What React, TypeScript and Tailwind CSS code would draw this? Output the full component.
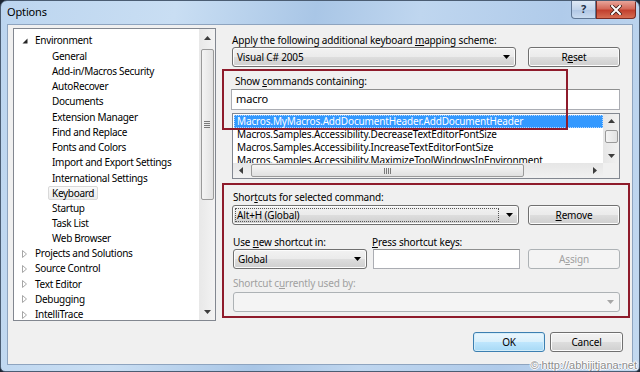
import React from 'react';

type TreeItem = { label: string; level: 0 | 1; state?: 'open' | 'closed'; selected?: boolean };

const tree: TreeItem[] = [
  { label: 'Environment', level: 0, state: 'open' },
  { label: 'General', level: 1 },
  { label: 'Add-in/Macros Security', level: 1 },
  { label: 'AutoRecover', level: 1 },
  { label: 'Documents', level: 1 },
  { label: 'Extension Manager', level: 1 },
  { label: 'Find and Replace', level: 1 },
  { label: 'Fonts and Colors', level: 1 },
  { label: 'Import and Export Settings', level: 1 },
  { label: 'International Settings', level: 1 },
  { label: 'Keyboard', level: 1, selected: true },
  { label: 'Startup', level: 1 },
  { label: 'Task List', level: 1 },
  { label: 'Web Browser', level: 1 },
  { label: 'Projects and Solutions', level: 0, state: 'closed' },
  { label: 'Source Control', level: 0, state: 'closed' },
  { label: 'Text Editor', level: 0, state: 'closed' },
  { label: 'Debugging', level: 0, state: 'closed' },
  { label: 'IntelliTrace', level: 0, state: 'closed' },
];

const commands = [
  'Macros.MyMacros.AddDocumentHeader.AddDocumentHeader',
  'Macros.Samples.Accessibility.DecreaseTextEditorFontSize',
  'Macros.Samples.Accessibility.IncreaseTextEditorFontSize',
  'Macros.Samples.Accessibility.MaximizeToolWindowsInEnvironment',
];

const btnBg = 'bg-[linear-gradient(#f2f2f2,#ebebeb_48%,#dddddd_52%,#cfcfcf)]';

const DropArrow = ({ color = '#000' }: { color?: string }) => (
  <svg width="7" height="4" viewBox="0 0 7 4">
    <polygon points="0,0 7,0 3.5,4" fill={color} />
  </svg>
);

const Arrow = ({ dir, color = '#000' }: { dir: 'up' | 'down' | 'left' | 'right'; color?: string }) => {
  const pts = {
    up: '0,4 7,4 3.5,0',
    down: '0,0 7,0 3.5,4',
    left: '4,0 4,7 0,3.5',
    right: '0,0 0,7 4,3.5',
  }[dir];
  const w = dir === 'up' || dir === 'down' ? 7 : 4;
  const h = dir === 'up' || dir === 'down' ? 4 : 7;
  return (
    <svg width={w} height={h} viewBox={`0 0 ${w} ${h}`}>
      <polygon points={pts} fill={color} />
    </svg>
  );
};

const Grip = ({ vertical }: { vertical: boolean }) => (
  <div className={`flex ${vertical ? 'flex-col gap-[1px]' : 'flex-row gap-[1px]'}`}>
    {[0, 1, 2, 3].map((i) => (
      <div key={i} className={vertical ? 'w-[6px] h-[1px] bg-[#7a7a7a]' : 'h-[6px] w-[1px] bg-[#7a7a7a]'} />
    ))}
  </div>
);

const Button = ({
  children,
  className = '',
  disabled = false,
  primary = false,
}: {
  children: React.ReactNode;
  className?: string;
  disabled?: boolean;
  primary?: boolean;
}) => (
  <div
    className={`h-[20px] flex items-center justify-center rounded-[3px] border ${
      primary
        ? 'border-[#3c7fb1] bg-[linear-gradient(#eaf6fd,#d9f0fc_48%,#bee6fd_52%,#a7d9f5)] shadow-[inset_0_0_0_1px_#d3edf9]'
        : disabled
        ? 'border-[#adb2b5] bg-[#f4f4f4] text-[#a0a0a0]'
        : `border-[#707070] ${btnBg} shadow-[inset_0_0_0_1px_#fcfcfc]`
    } ${className}`}
  >
    {children}
  </div>
);

const Combo = ({
  value,
  focused = false,
  disabled = false,
  className = '',
}: {
  value: string;
  focused?: boolean;
  disabled?: boolean;
  className?: string;
}) => (
  <div
    className={`h-[20px] flex items-center rounded-[3px] border ${
      disabled ? 'border-[#adb2b5] bg-[#f4f4f4]' : `border-[#707070] ${btnBg} shadow-[inset_0_0_0_1px_#fcfcfc]`
    } ${className}`}
  >
    <div className="flex-1 h-full p-[2px]">
      <div
        className={`h-full flex items-center pl-[1px] ${
          focused ? 'border border-dotted border-[#555]' : 'border border-transparent'
        }`}
      >
        {value}
      </div>
    </div>
    <div className="w-[17px] flex items-center justify-center">
      <DropArrow color={disabled ? '#a6a6a6' : '#000'} />
    </div>
  </div>
);

const Label = ({ children, className = '' }: { children: React.ReactNode; className?: string }) => (
  <div className={`h-[14px] leading-[14px] ${className}`}>{children}</div>
);

const TreeArrow = ({ state }: { state: 'open' | 'closed' }) =>
  state === 'open' ? (
    <svg width="6" height="6" viewBox="0 0 6 6">
      <polygon points="5.5,0.5 5.5,5.5 0.5,5.5" fill="#262626" />
    </svg>
  ) : (
    <svg width="5" height="8" viewBox="0 0 5 8">
      <polygon points="0.5,0.5 4.5,4 0.5,7.5" fill="#fff" stroke="#a6a6a6" strokeWidth="1" />
    </svg>
  );

const TreeView = () => (
  <div className="mt-[3px] w-[203px] h-[293px] border border-[#828790] bg-white flex tracking-[-0.3px]">
    <div className="flex-1 pt-[4px] overflow-hidden">
      {tree.map((item) => (
        <div key={item.label} className="h-[15.22px] flex items-center whitespace-nowrap">
          {item.level === 0 ? (
            <>
              <div className="w-[21px] pl-[8px] flex items-center">
                <TreeArrow state={item.state!} />
              </div>
              <span>{item.label}</span>
            </>
          ) : (
            <div className="pl-[34px] flex items-center">
              <span
                className={`px-[3px] h-[14px] leading-[13px] rounded-[2px] border ${
                  item.selected
                    ? 'border-[#d9d9d9] bg-[linear-gradient(#fafafa,#ececec)]'
                    : 'border-transparent'
                }`}
              >
                {item.label}
              </span>
            </div>
          )}
        </div>
      ))}
    </div>
    <div className="w-[16px] bg-[linear-gradient(90deg,#e8e8e8,#f3f3f3)] flex flex-col items-center">
      <div className="h-[17px] flex items-center justify-center">
        <Arrow dir="up" color="#3d3d3d" />
      </div>
      <div className="mt-[3px] w-[13px] h-[151px] rounded-[2px] border border-[#9a9a9a] bg-[linear-gradient(90deg,#f4f4f4,#e2e2e2)] flex items-center justify-center">
        <Grip vertical />
      </div>
      <div className="flex-1" />
      <div className="h-[17px] flex items-center justify-center">
        <Arrow dir="down" color="#3d3d3d" />
      </div>
    </div>
  </div>
);

const CommandList = () => (
  <div className="mt-[3px] w-[388px] border border-[#828790] bg-white flex flex-col">
    <div className="flex h-[49px]">
      <div className="w-[370px] h-[49px] overflow-hidden pt-[1px] pl-[1px] text-[10px]">
        {commands.map((c, i) => (
          <div
            key={c}
            className={`h-[13px] leading-[11px] whitespace-nowrap pl-[2px] ${
              i === 0 ? 'bg-[#3399ff] text-white border border-dotted border-[#b4d7ff]' : 'border border-transparent'
            }`}
          >
            {c}
          </div>
        ))}
      </div>
      <div className="w-[16px] h-[49px] bg-[linear-gradient(90deg,#e6e6e6,#f1f1f1)] flex flex-col items-center">
        <div className="h-[14px] flex items-center justify-center">
          <Arrow dir="up" color="#3d3d3d" />
        </div>
        <div className="mt-[2px] w-[13px] h-[13px] rounded-[2px] border border-[#9a9a9a] bg-[linear-gradient(90deg,#f4f4f4,#e2e2e2)]" />
        <div className="flex-1" />
        <div className="h-[14px] flex items-center justify-center">
          <Arrow dir="down" color="#3d3d3d" />
        </div>
      </div>
    </div>
    <div className="flex h-[15px]">
      <div className="w-[370px] h-[15px] bg-[linear-gradient(#e6e6e6,#f1f1f1)] flex items-center">
        <div className="w-[16px] h-[15px] flex items-center justify-center">
          <Arrow dir="left" color="#3d3d3d" />
        </div>
        <div className="ml-[2px] w-[273px] h-[13px] rounded-[2px] border border-[#9a9a9a] bg-[linear-gradient(#f6f6f6,#e0e0e0)] flex items-center justify-center">
          <Grip vertical={false} />
        </div>
        <div className="flex-1" />
        <div className="w-[16px] h-[15px] flex items-center justify-center">
          <Arrow dir="right" color="#3d3d3d" />
        </div>
      </div>
      <div className="w-[16px] h-[15px] bg-[#f0f0f0]" />
    </div>
  </div>
);

const RightPanel = () => (
  <div className="relative ml-[6px] w-[410px] pt-[8px] pl-[10px] pr-[12px]">
    <Label>
      Apply the following additional keyboard <u>m</u>apping scheme:
    </Label>
    <div className="flex gap-[12px]">
      <Combo value="Visual C# 2005" className="flex-1" />
      <Button className="w-[92px]">
        <span>
          R<u>e</u>set
        </span>
      </Button>
    </div>

    <Label className="mt-[7px] pl-[3px]">
      Show <u>c</u>ommands containing:
    </Label>
    <div className="mt-[1px] -ml-[1px] h-[21px] border border-[#abadb3] border-t-[#8e8f8f] bg-white flex items-center pl-[4px] text-[11px]">
      macro
    </div>
    <CommandList />

    <Label className="mt-[11px] pl-[1px]">
      Shor<u>t</u>cuts for selected command:
    </Label>
    <div className="mt-[1px] flex gap-[9px]">
      <Combo value="Alt+H (Global)" focused className="flex-1" />
      <Button className="w-[92px]">
        <span>
          <u>R</u>emove
        </span>
      </Button>
    </div>

    <div className="mt-[10px] flex">
      <Label className="w-[140px] pl-[1px]">
        Use <u>n</u>ew shortcut in:
      </Label>
      <Label>
        <u>P</u>ress shortcut keys:
      </Label>
    </div>
    <div className="flex">
      <Combo value="Global" className="ml-[1px] w-[134px]" />
      <div className="ml-[6px] w-[147px] h-[20px] border border-[#abadb3] border-t-[#8e8f8f] bg-white" />
      <Button disabled className="ml-auto w-[92px]">
        <span>
          A<u>s</u>sign
        </span>
      </Button>
    </div>

    <Label className="mt-[7px] pl-[1px] text-[#a0a0a0]">
      Shortcut c<u>u</u>rrently used by:
    </Label>
    <Combo value="" disabled className="mt-[2px] ml-[1px]" />

    <div className="absolute left-0 top-[44px] w-[346px] h-[61px] border-2 border-[#8e1b2b]" />
    <div className="absolute left-0 top-[158px] w-[408px] h-[135px] border-2 border-[#8e1b2b]" />
  </div>
);

export default function App() {
  return (
    <div className="w-[640px] h-[372px] bg-[#1d2633] font-['Noto_Sans',sans-serif] text-[10px] text-black tracking-[-0.15px] overflow-hidden">
      <div className="relative w-[640px] h-[372px] rounded-t-[7px] rounded-b-[5px] border border-[#4b5d73] bg-[linear-gradient(100deg,#bcd5ef_0%,#c9def3_25%,#a9c6e6_45%,#bfd6ef_60%,#b0cbea_80%,#c3d9f0_100%)] flex flex-col overflow-hidden">
        <div className="h-[23px] flex items-start">
          <div className="pl-[6px] pt-[4px] text-[11px] leading-[14px] text-black">Options</div>
          <div className="flex-1" />
          <div className="w-[25px] h-[18px] rounded-bl-[4px] border border-t-0 border-[#5f7694] bg-[linear-gradient(#dfe9f5,#c2d4ea_50%,#afc5e3_51%,#c9dbf0)] flex items-center justify-center text-[11px] font-bold text-[#1f2f45]">
            ?
          </div>
          <div className="w-[40px] h-[18px] mr-[3px] rounded-br-[4px] border border-t-0 border-[#7a2a22] bg-[linear-gradient(#e8a59a,#d46a5a_45%,#c2402e_55%,#d66d52)] flex items-center justify-center">
            <svg width="12" height="10" viewBox="0 0 12 10">
              <path d="M2 1 L10 9 M10 1 L2 9" stroke="#3a1a14" strokeWidth="3.6" strokeLinecap="square" />
              <path d="M2 1 L10 9 M10 1 L2 9" stroke="#fff" strokeWidth="2" strokeLinecap="square" />
            </svg>
          </div>
        </div>

        <div className="mx-[6px] h-[341px] border border-[#8ea4bf] bg-[#f0f0f0] flex flex-col">
          <div className="flex pl-[5px]">
            <TreeView />
            <RightPanel />
          </div>
          <div className="mt-[11px] pr-[9px] flex justify-end gap-[5px]">
            <Button primary className="w-[72px]">
              OK
            </Button>
            <Button className="w-[73px]">Cancel</Button>
          </div>
        </div>

        <div className="absolute right-[2px] bottom-[0px] font-['Liberation_Sans',sans-serif] text-[11px] leading-[12px] tracking-normal text-[#8c8c8c] [text-shadow:0_0_1px_#fff,0_0_1px_#fff,1px_0_0_#fff,-1px_0_0_#fff,0_1px_0_#fff,0_-1px_0_#fff]">
          © http://abhijitjana.net
        </div>
      </div>
    </div>
  );
}
